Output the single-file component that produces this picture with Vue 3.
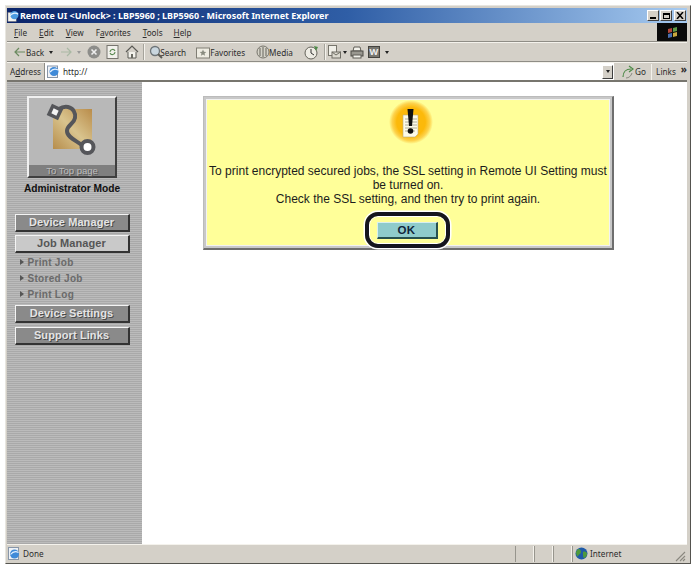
<template>
  <div class="window">
    <!-- Title bar -->
    <div class="titlebar">
      <svg class="title-icon" width="12" height="14" viewBox="0 0 13 14">
        <rect x="1" y="3" width="9" height="10" fill="#f4f4ee" stroke="#667" stroke-width="0.6"/>
        <circle cx="8" cy="6" r="4.5" fill="#4c9be0"/>
        <path d="M3 7c2-3 6-4 9-2" stroke="#e8f4ff" stroke-width="1.4" fill="none"/>
      </svg>
      <span class="title-text">Remote UI &lt;Unlock&gt; : LBP5960 ; LBP5960 - Microsoft Internet Explorer</span>
      <div class="win-btns">
        <span class="win-btn"><i class="glyph-min"></i></span>
        <span class="win-btn"><i class="glyph-max"></i></span>
        <span class="win-btn close-btn">
          <svg width="8" height="7" viewBox="0 0 8 7"><path d="M1 0l6 7M7 0L1 7" stroke="#000" stroke-width="1.5"/></svg>
        </span>
      </div>
    </div>

    <!-- Menu -->
    <div class="menubar">
      <div class="menus">
        <span class="menu m-file"><u>F</u>ile</span>
        <span class="menu m-edit"><u>E</u>dit</span>
        <span class="menu m-view"><u>V</u>iew</span>
        <span class="menu m-fav">F<u>a</u>vorites</span>
        <span class="menu m-tools"><u>T</u>ools</span>
        <span class="menu m-help"><u>H</u>elp</span>
      </div>
      <div class="flag">
        <svg width="12" height="11" viewBox="0 0 12 11">
          <path d="M1 2l4-1v4l-4 1z" fill="#b5483c"/>
          <path d="M6 1l4-1v4l-4 1z" fill="#5f9a48"/>
          <path d="M1 7l4-1v4l-4 1z" fill="#4a6fb0"/>
          <path d="M6 6l4-1v4l-4 1z" fill="#c9a83e"/>
        </svg>
      </div>
    </div>

    <!-- Toolbar -->
    <div class="toolbar">
      <svg class="t-back" width="12" height="10" viewBox="0 0 12 10"><path d="M5 1L1 5l4 4M1 5h10" stroke="#6b8a60" stroke-width="1.2" fill="none"/></svg>
      <span class="t-label">Back</span>
      <i class="caret c-back"></i>
      <svg class="t-fwd" width="12" height="10" viewBox="0 0 12 10"><path d="M7 1l4 4-4 4M11 5H1" stroke="#a9b8a4" stroke-width="1.2" fill="none"/></svg>
      <i class="caret c-fwd caret-dim"></i>
      <svg class="t-stop" width="14" height="14" viewBox="0 0 14 14">
        <circle cx="7" cy="7" r="6.5" fill="#8d8d8a"/>
        <path d="M4.5 4.5l5 5M9.5 4.5l-5 5" stroke="#eee" stroke-width="1.6"/>
      </svg>
      <svg class="t-refresh" width="13" height="14" viewBox="0 0 13 14">
        <rect x="1" y="0.5" width="11" height="13" fill="#f2f1ec" stroke="#77756e"/>
        <path d="M4 7a2.6 2.6 0 0 1 5-1M9 7a2.6 2.6 0 0 1-5 1" stroke="#5b8a52" stroke-width="1.1" fill="none"/>
      </svg>
      <svg class="t-home" width="14" height="14" viewBox="0 0 14 14">
        <path d="M1 7l6-6 6 6" stroke="#5a5a55" stroke-width="1.2" fill="none"/>
        <path d="M3 7v6h8V7" fill="#f3f2ec" stroke="#5a5a55"/>
        <rect x="6" y="9" width="2" height="4" fill="#6a6a62"/>
      </svg>
      <i class="sep s-one"></i>
      <svg class="t-search" width="14" height="14" viewBox="0 0 14 14">
        <circle cx="6" cy="6" r="4.5" fill="#c9d6de" stroke="#6d7478" stroke-width="1.3"/>
        <path d="M9 9l4 4" stroke="#5b5b55" stroke-width="2"/>
      </svg>
      <span class="t-label">Search</span>
      <svg class="t-fav" width="14" height="13" viewBox="0 0 14 13">
        <rect x="0.5" y="2" width="13" height="10" fill="#eeece2" stroke="#807e74"/>
        <path d="M7 3.5l1 2.3 2.3.2-1.8 1.5.6 2.3L7 8.600l-2.100 1.200.6-2.300L3.700 6 6 5.800z" fill="#8a8c80"/>
      </svg>
      <span class="t-label">Favorites</span>
      <svg class="t-media" width="14" height="14" viewBox="0 0 14 14">
        <circle cx="7" cy="7" r="6" fill="#d5d3c8" stroke="#77756c"/>
        <path d="M4 3v8M7 2v10M10 3v8" stroke="#66645c"/>
      </svg>
      <span class="t-label">Media</span>
      <svg class="t-hist" width="15" height="15" viewBox="0 0 15 15">
        <circle cx="7" cy="8" r="6" fill="#eeece4" stroke="#66645c"/>
        <path d="M7 4v4l3 2" stroke="#333" fill="none"/>
        <path d="M10 1l4 1-2 4z" fill="#4d8a48"/>
      </svg>
      <i class="sep s-two"></i>
      <svg class="t-mail" width="13" height="14" viewBox="0 0 13 14">
        <rect x="0.500" y="0.500" width="8" height="10" fill="#f0efe8" stroke="#77756c"/>
        <rect x="4" y="7" width="8.500" height="6" fill="#dcdad0" stroke="#6f6d64"/>
        <path d="M4 7l4 3 4.500-3" stroke="#6f6d64" fill="none"/>
      </svg>
      <i class="caret c-mail"></i>
      <svg class="t-print" width="14" height="13" viewBox="0 0 14 13">
        <path d="M4 1h6l1 4H3z" fill="#f2f1ea" stroke="#5f5d56"/>
        <rect x="1" y="5" width="12" height="5" fill="#9a9890" stroke="#4d4b45"/>
        <rect x="3" y="9" width="8" height="3" fill="#f2f1ea" stroke="#5f5d56"/>
      </svg>
      <span class="t-word">W</span>
      <i class="caret c-word"></i>
    </div>

    <!-- Address -->
    <div class="addressbar">
      <span class="addr-label">A<u>d</u>dress</span>
      <div class="addr-input">
        <svg width="13" height="13" viewBox="0 0 13 13">
          <rect x="0.500" y="1" width="10" height="11.500" fill="#f1f3f6" stroke="#8896a8"/>
          <circle cx="7" cy="6.500" r="4.500" fill="#3f8ad8"/>
          <path d="M3 7c2-2.500 5-3.500 8-2" stroke="#e4f1ff" stroke-width="1.300" fill="none"/>
        </svg>
        <span class="addr-url">http://</span>
        <span class="addr-drop"><i class="caret"></i></span>
      </div>
      <svg class="go-icon" width="13" height="14" viewBox="0 0 13 14">
        <path d="M2 12c0-5 3-8 8-8" stroke="#4d8a48" stroke-width="1.200" fill="none"/>
        <path d="M8 1l4 3-4 3" stroke="#4d8a48" stroke-width="1.200" fill="none"/>
        <path d="M5 13c3 0 5-2 6-5" stroke="#8a8a80" fill="none"/>
      </svg>
      <span class="go-label">Go</span>
      <i class="addr-sep"></i>
      <span class="links">Links</span>
      <span class="chev">»</span>
    </div>

    <!-- Page -->
    <div class="page">
      <aside class="sidebar">
        <a class="top-link">
          <svg class="logo" width="86" height="67" viewBox="0 0 86 67">
            <defs>
              <linearGradient id="gold" x1="1" y1="0" x2="0" y2="1">
                <stop offset="0" stop-color="#b98c4a"/>
                <stop offset="0.500" stop-color="#d9c48e"/>
                <stop offset="1" stop-color="#b68d4c"/>
              </linearGradient>
            </defs>
            <rect x="24" y="11" width="39" height="40" fill="url(#gold)"/>
            <path d="M30 11C33 9 36 8.500 39 9C44 10 47 15 46 20C45 26 38 27 38 33C38 39 46 42 53 47" fill="none" stroke="#55565a" stroke-width="4"/>
            <rect x="21.500" y="9.500" width="9" height="9" transform="rotate(25 26 14)" fill="#f4f4f4" stroke="#55565a" stroke-width="3.500"/>
            <circle cx="58.500" cy="49" r="6" fill="#fff" stroke="#55565a" stroke-width="4"/>
          </svg>
          <span class="top-label">To Top page</span>
        </a>
        <div class="admin">Administrator Mode</div>

        <div class="nav-btn dark first">Device Manager</div>
        <div class="nav-btn light">Job Manager</div>
        <ul class="subnav">
          <li v-for="item in subItems" :key="item"><i class="tri"></i>{{ item }}</li>
        </ul>
        <div class="nav-btn dark">Device Settings</div>
        <div class="nav-btn dark">Support Links</div>
      </aside>

      <main class="content">
        <div class="dialog">
          <div class="dialog-inner">
            <svg class="alert" width="44" height="44" viewBox="0 0 44 44">
              <defs>
                <radialGradient id="halo">
                  <stop offset="0.650" stop-color="#fcb90a"/>
                  <stop offset="0.850" stop-color="#fdd24c"/>
                  <stop offset="1" stop-color="#ffff99"/>
                </radialGradient>
              </defs>
              <circle cx="22" cy="22" r="22" fill="url(#halo)"/>
              <path d="M14 15h15v19l-3 3H14z" fill="#fdfbe8" stroke="#b9ad80" stroke-width="0.600"/>
              <path d="M16 19h12M16 22h12M16 25h12M16 28h12M16 31h10" stroke="#9a9a8c" stroke-width="0.800"/>
              <path d="M18.500 9h6l-1.500 17h-3z" fill="#111"/>
              <circle cx="21.500" cy="31" r="2.800" fill="#111"/>
            </svg>
            <p class="msg">
              To print encrypted secured jobs, the SSL setting in Remote UI Setting must be turned on.<br>
              Check the SSL setting, and then try to print again.
            </p>
            <div class="ok-wrap">
              <button class="ok">OK</button>
            </div>
          </div>
        </div>
      </main>
    </div>

    <!-- Status bar -->
    <div class="statusbar">
      <svg class="st-page" width="12" height="13" viewBox="0 0 12 13">
        <rect x="0.500" y="0.500" width="10" height="12" fill="#eef1f5" stroke="#8896a8"/>
        <circle cx="6.500" cy="7" r="4.500" fill="#3f8ad8"/>
        <path d="M2.500 7.500c2-2.500 5-3.500 8-2" stroke="#e4f1ff" stroke-width="1.200" fill="none"/>
      </svg>
      <span class="st-done">Done</span>
      <i class="st-cell"></i>
      <i class="st-cell"></i>
      <i class="st-cell"></i>
      <div class="st-zone">
        <svg width="13" height="13" viewBox="0 0 13 13">
          <circle cx="6.500" cy="6.500" r="6" fill="#1f5aa8"/>
          <path d="M3 2c2 0 3 1 3 3S4 7 3 9 1 6 1 5zM8 5c2-1 4 0 4 2s-2 4-3 4-1-3-1-6z" fill="#4f9a3c"/>
        </svg>
        <span>Internet</span>
      </div>
      <svg class="grip" width="11" height="11" viewBox="0 0 11 11">
        <path d="M10 1L1 10M10 5l-5 5M10 8l-2 2" stroke="#8a887f" stroke-width="1.100"/>
      </svg>
    </div>
  </div>
</template>

<script setup>
const subItems = ['Print Job', 'Stored Job', 'Print Log']
</script>

<style>
html, body {
  margin: 0;
  background: #fff;
}
</style>

<style scoped>
.window {
  box-sizing: border-box;
  width: 686px;
  height: 559px;
  margin: 5px 0 0 5px;
  padding: 2px 3px 1px 1px;
  background: #d4d0c8;
  border-right: 1px solid #55544f;
  border-bottom: 1px solid #55544f;
  border-top: 1px solid #e8e6e0;
  border-left: 1px solid #e8e6e0;
  display: flex;
  flex-direction: column;
  font-family: "Noto Sans", "Liberation Sans", sans-serif;
  font-size: 8.2px;
  color: #2c2c2c;
  overflow: hidden;
}

.titlebar {
  height: 15px;
  flex-shrink: 0;
  display: flex;
  align-items: center;
  background: linear-gradient(90deg, #0a246a 0%, #2f5ea6 50%, #a6caf0 100%);
  color: #fff;
}
.title-icon {
  margin: 0 1px 0 0;
}
.title-text {
  font-weight: 700;
  font-size: 8.95px;
  white-space: nowrap;
}
.win-btns {
  margin-left: auto;
  margin-right: 1px;
  display: flex;
  gap: 1px;
}
.win-btn {
  width: 12px;
  height: 11px;
  box-sizing: border-box;
  background: #d4d0c8;
  border: 1px solid;
  border-color: #fff #404040 #404040 #fff;
  display: flex;
  align-items: center;
  justify-content: center;
  position: relative;
}
.close-btn {
  margin-left: 1px;
}
.glyph-min {
  width: 6px;
  height: 2px;
  background: #000;
  margin-top: 5px;
}
.glyph-max {
  width: 7px;
  height: 6px;
  box-sizing: border-box;
  border: 1px solid #000;
  border-top-width: 2px;
}

.menubar {
  height: 19px;
  flex-shrink: 0;
  display: flex;
  align-items: center;
  border-bottom: 1px solid #8f8d86;
  box-sizing: border-box;
}
.menus {
  display: flex;
  flex: 1;
  padding-left: 7px;
}
.menu {
  font-size: 8.2px;
}
.m-edit { margin-left: 12px; }
.m-view { margin-left: 12px; }
.m-fav { margin-left: 12px; }
.m-tools { margin-left: 12px; }
.m-help { margin-left: 11px; }
.flag {
  width: 30px;
  height: 18px;
  background: #0a0a0a;
  display: flex;
  align-items: center;
  justify-content: center;
  padding-left: 2px;
  box-sizing: border-box;
}

.toolbar {
  height: 20px;
  flex-shrink: 0;
  display: flex;
  align-items: center;
  padding-left: 7px;
  box-sizing: border-box;
  border-top: 1px solid #f4f2ec;
  border-bottom: 1px solid #8f8d86;
}
.t-label {
  font-size: 8.2px;
  white-space: nowrap;
}
.caret {
  display: inline-block;
  width: 0;
  height: 0;
  border-left: 2.5px solid transparent;
  border-right: 2.5px solid transparent;
  border-top: 3px solid #222;
}
.caret-dim {
  border-top-color: #999;
}
.c-back { margin-left: 5px; }
.t-fwd { margin-left: 7px; }
.c-fwd { margin-left: 5px; }
.t-stop { margin-left: 6px; }
.t-refresh { margin-left: 5px; }
.t-home { margin-left: 6px; }
.sep {
  width: 1px;
  height: 16px;
  background: #a5a39b;
  border-right: 1px solid #f4f2ec;
}
.s-one { margin: 0 4px 0 4px; }
.s-two { margin: 0 2px 0 5px; }
.t-search { margin-right: -3px; }
.t-fav { margin: 0 0 0 10px; }
.t-media { margin: 0 -1px 0 11px; }
.t-hist { margin-left: 11px; }
.c-mail { margin-left: 2px; }
.t-print { margin-left: 3px; }
.t-word {
  margin-left: 4px;
  width: 12px;
  height: 12px;
  box-sizing: border-box;
  background: #77766f;
  border: 1px solid #44433f;
  color: #eee;
  font-size: 9px;
  font-weight: 700;
  line-height: 10px;
  text-align: center;
}
.c-word { margin-left: 5px; }

.addressbar {
  height: 18px;
  flex-shrink: 0;
  display: flex;
  align-items: center;
  padding-left: 3px;
  box-sizing: border-box;
  border-top: 1px solid #f4f2ec;
}
.addr-label {
  width: 34px;
  flex-shrink: 0;
  font-size: 8.2px;
}
.addr-input {
  width: 570px;
  height: 17px;
  flex-shrink: 0;
  box-sizing: border-box;
  background: #fff;
  border-left: 1px solid #8f8d86;
  display: flex;
  align-items: center;
  padding-left: 2px;
  gap: 3px;
}
.addr-url {
  font-size: 8.2px;
}
.addr-drop {
  margin-left: auto;
  width: 11px;
  height: 14px;
  margin-right: 1px;
  box-sizing: border-box;
  background: #d4d0c8;
  border: 1px solid;
  border-color: #fff #404040 #404040 #fff;
  display: flex;
  align-items: center;
  justify-content: center;
}
.go-icon {
  margin-left: 7px;
  flex-shrink: 0;
}
.go-label {
  font-size: 8.2px;
  margin-left: 1px;
}
.addr-sep {
  width: 1px;
  height: 16px;
  background: #f4f2ec;
  margin: 0 5px;
}
.links {
  font-size: 8.2px;
}
.chev {
  font-size: 10px;
  font-weight: 700;
  margin: -5px 0 0 5px;
}

.page {
  flex: 1;
  min-height: 0;
  display: flex;
  border-top: 2px solid #77756e;
  background: #fff;
}
.sidebar {
  width: 135px;
  flex-shrink: 0;
  box-sizing: border-box;
  padding: 14px 5px 0 0;
  display: flex;
  flex-direction: column;
  align-items: center;
  background: repeating-linear-gradient(180deg, #bbbbbb 0 1px, #a9a9a9 1px 2px);
}
.top-link {
  width: 90px;
  height: 82px;
  box-sizing: border-box;
  background: #b8b8b8;
  border: 2px solid;
  border-color: #f0f0f0 #3f3f3f #3f3f3f #f0f0f0;
  display: flex;
  flex-direction: column;
}
.logo {
  flex: 1;
}
.top-label {
  height: 11px;
  background: #7f7f7f;
  color: #bdbdbd;
  font-family: "Liberation Sans", Arial, sans-serif;
  font-size: 9.5px;
  line-height: 11px;
  text-align: center;
  text-shadow: 1px 1px 0 #555;
}
.admin {
  margin-top: 4px;
  font-family: "Liberation Sans", Arial, sans-serif;
  font-size: 10.2px;
  font-weight: 700;
  color: #111;
  line-height: 13px;
  white-space: nowrap;
}
.nav-btn {
  width: 115px;
  height: 18px;
  box-sizing: border-box;
  flex-shrink: 0;
  border: 1px solid;
  border-width: 1px 2px 2px 1px;
  border-color: #f4f4f4 #333 #333 #f4f4f4;
  font-family: "Liberation Sans", Arial, sans-serif;
  font-size: 11px;
  font-weight: 700;
  letter-spacing: 0.1px;
  line-height: 15px;
  text-align: center;
  margin-bottom: 3px;
}
.nav-btn.first {
  margin-top: 19px;
}
.nav-btn.dark {
  background: #8a8a8a;
  color: #e4e4e4;
  text-shadow: 1px 1px 0 #4a4a4a;
}
.nav-btn.light {
  background: #c9c9c9;
  color: #555;
  margin-bottom: 0;
}
.nav-btn.dark + .nav-btn.dark {
  margin-top: 1px;
}
.subnav {
  list-style: none;
  width: 115px;
  margin: 0 0 2px;
  padding: 2px 0 0 5px;
  box-sizing: border-box;
}
.subnav li {
  height: 16px;
  font-family: "Liberation Sans", Arial, sans-serif;
  font-size: 10px;
  font-weight: 700;
  letter-spacing: 0.3px;
  color: #6a6a6a;
  line-height: 16px;
  display: flex;
  align-items: center;
}
.tri {
  width: 0;
  height: 0;
  border-top: 3.5px solid transparent;
  border-bottom: 3.5px solid transparent;
  border-left: 4px solid #555;
  margin: -3px 4px 0 0;
}

.content {
  flex: 1;
  min-width: 0;
  padding: 14px 0 0 61px;
}
.dialog {
  width: 411px;
  height: 154px;
  box-sizing: border-box;
  padding: 2px;
  background: #c8c8c8;
  border-right: 2px solid #6e6e6e;
  border-bottom: 2px solid #6e6e6e;
  border-top: 1px solid #bbb;
  border-left: 1px solid #bbb;
}
.dialog-inner {
  height: 100%;
  box-sizing: border-box;
  background: #ffff99;
  border: 1px solid #f2f2f2;
  display: flex;
  flex-direction: column;
  align-items: center;
}
.alert {
  flex-shrink: 0;
  margin-left: 6px;
}
.msg {
  margin: 20px 0 0;
  padding: 0 2px;
  font-family: "Liberation Sans", Arial, sans-serif;
  font-size: 12px;
  line-height: 14px;
  text-align: center;
  color: #1c1c1c;
}
.ok-wrap {
  margin-top: 16px;
  position: relative;
  margin-left: -2px;
}
.ok {
  display: block;
  width: 61px;
  height: 17px;
  box-sizing: border-box;
  padding: 0;
  background: #8fcbcb;
  border: 1px solid;
  border-width: 1px 2px 2px 1px;
  border-color: #d8efef #27504f #27504f #d8efef;
  font-family: "Liberation Sans", Arial, sans-serif;
  font-size: 11.5px;
  font-weight: 700;
  letter-spacing: 0.5px;
  color: #10243a;
  line-height: 13px;
}
/* callout drawn over the dialog, runs past its bottom edge */
.ok-wrap::after {
  content: "";
  position: absolute;
  left: -12px;
  top: -10px;
  width: 85px;
  height: 36px;
  border: 4px solid #15151f;
  border-radius: 13px;
  box-shadow: 0 0 0 1.5px #fff, inset 0 0 0 1px #fff;
  box-sizing: border-box;
  pointer-events: none;
}

.statusbar {
  height: 18px;
  flex-shrink: 0;
  display: flex;
  align-items: center;
  box-sizing: border-box;
  border-top: 1px solid #f4f2ec;
  padding-left: 1px;
}
.st-done {
  margin-left: 3px;
  width: 492px;
  font-size: 8.2px;
}
.st-cell {
  width: 17px;
  height: 16px;
  flex-shrink: 0;
  border-left: 1px solid #97958d;
  border-right: 1px solid #f4f2ec;
}
.st-zone {
  flex: 1;
  display: flex;
  align-items: center;
  gap: 2px;
  height: 16px;
  border-left: 1px solid #97958d;
  padding-left: 2px;
  font-size: 8.2px;
}
.grip {
  margin-right: 1px;
  align-self: flex-end;
}
</style>
